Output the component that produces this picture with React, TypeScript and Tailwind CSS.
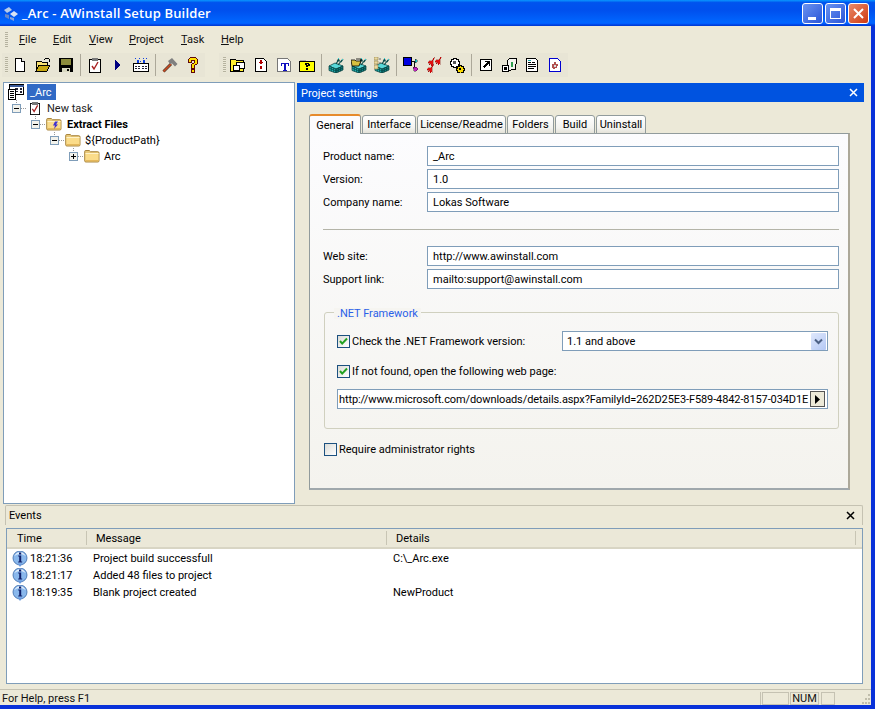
import React from 'react';

const font = { fontFamily: 'Roboto, sans-serif' };

// --- small drawn icons, all on a 16x16 grid ---
const Svg = ({ children, className = 'w-4 h-4' }: { children: React.ReactNode; className?: string }) => (
  <svg viewBox="0 0 16 16" className={className} shapeRendering="crispEdges">
    {children}
  </svg>
);

const NewIcon = () => (
  <Svg>
    <path d="M3.5 1.5h6l3 3v10h-9z" fill="#fff" stroke="#000" />
    <path d="M9.5 1.5v3h3" fill="#ddd" stroke="#000" />
  </Svg>
);
const OpenIcon = () => (
  <Svg>
    <path d="M1 4h5l1 1h5v3H4L1 14z" fill="#f8e070" stroke="#000" strokeWidth="1" />
    <path d="M1 14l3-6h11l-3 6z" fill="#c8a810" stroke="#000" strokeWidth="1" />
    <path d="M9 3l2-2 3 1v3" fill="none" stroke="#000" />
  </Svg>
);
const SaveIcon = () => (
  <Svg>
    <path d="M1 1h14v14H1z" fill="#000" />
    <path d="M3 2h10v6H3z" fill="#8b8b3c" />
    <path d="M4 11h8v4H4z" fill="#d8d8c0" />
    <path d="M9 12h2v2H9z" fill="#000" />
  </Svg>
);
const TaskIcon = ({ className }: { className?: string }) => (
  <Svg className={className}>
    <path d="M2.5 2.5h11v13h-11z" fill="#fff" stroke="#000" />
    <path d="M5 1h6v3H5z" fill="#777" />
    <path d="M5 9l2 3 4-7" fill="none" stroke="#a82020" strokeWidth="1.4" shapeRendering="auto" />
  </Svg>
);
const PlayIcon = () => (
  <Svg>
    <path d="M5 3l6 5-6 5z" fill="#000080" />
  </Svg>
);
const RunIcon = () => (
  <Svg>
    <path d="M.5 6.5h15v8H.5z" fill="#fff" stroke="#000" />
    <path d="M2 9h2v1H2zM5 9h2v1H5zM9 9h2v1H9zM12 9h2v1h-2zM2 11h2v1H2zM5 11h2v1H5zM9 11h2v1H9zM12 11h2v1h-2z" fill="#223" />
    <path d="M2 1h1v1H2zM6 1h1v1H6zM10 1h1v1h-1zM13 1h1v1h-1zM4 3h2v3H4zM10 3h2v3h-2zM7 4h1v1H7z" fill="#1040e0" />
  </Svg>
);
const HammerIcon = () => (
  <svg viewBox="0 0 16 16" className="w-4 h-4">
    <path d="M1.5 14.5L9 7" stroke="#5a4030" strokeWidth="3" />
    <path d="M1.5 14.5L9 7" stroke="#d04a20" strokeWidth="1.5" />
    <path d="M6 4l4-3 5.5 6-2.5 2.5-3-3-2 .5z" fill="#808080" />
  </svg>
);
const HelpIcon = () => (
  <Svg>
    <path d="M3.5 5.5v-3l2-2h5l2 2v4l-3 2v3h-3v-4l3-2v-2h-3v2z" fill="#ffe000" stroke="#600808" />
    <path d="M6.5 12.5h3v3h-3z" fill="#ffe000" stroke="#600808" />
  </Svg>
);
const FolderStackIcon = () => (
  <Svg>
    <path d="M.5 2.5h5l1 1h7v11H.5z" fill="#ffef30" stroke="#000" />
    <path d="M6.5 5.5h8v6h-8z" fill="#fff" stroke="#000" />
    <path d="M3.5 8.5h6v5h-6z" fill="#fff" stroke="#000" />
  </Svg>
);
const PageDiamondIcon = () => (
  <Svg>
    <path d="M2.5 1.5h8l3 3v10h-11z" fill="#fff" stroke="#000" />
    <path d="M7 3h2v4H7zM6 5h4v1H6zM7 9h2v3H7z" fill="#b00000" />
  </Svg>
);
const PageTIcon = () => (
  <Svg>
    <path d="M1.5 1.5h10l3 3v10h-13z" fill="#fff" stroke="#777" />
    <path d="M5 6h8v3h-1V7h-2v6h1v1H7v-1h1V7H6v2H5z" fill="#1010c0" />
  </Svg>
);
const FolderHelpIcon = () => (
  <Svg>
    <path d="M1 3.5h5l1 1h8" fill="#f0d860" stroke="#aaa" />
    <path d="M.5 4.5h15v10H.5z" fill="#ffff00" stroke="#000" />
    <path d="M6 6h4v1h1v2H9v1H7V8h2V7H8v1H6zM7 11h2v2H7z" fill="#000" />
  </Svg>
);
// teal isometric grid box with little sprouts on top
const GridCube = () => (
  <>
    <path d="M1 9l6-3 8 3-7 3z" fill="#58d8d8" stroke="#003838" strokeWidth=".7" />
    <path d="M1 9l7 3v4l-7-2.5z" fill="#20b0b0" stroke="#003838" strokeWidth=".7" />
    <path d="M8 12l7-3v4l-7 3z" fill="#108080" stroke="#003838" strokeWidth=".7" />
    <path d="M3.3 10v4.3M5.6 11v4.3M10.3 11v4.3M12.6 10v4.3M1 11l7 3M8 14l7-3" stroke="#003838" strokeWidth=".6" fill="none" />
    <path d="M8 7l3-5M10 8l4-5M12 4l-3-1M13 5l2-3" stroke="#064a4a" strokeWidth="1.2" fill="none" />
    <path d="M10 2l1-1M14 3l1-1" stroke="#30d0d0" fill="none" />
  </>
);
const CubeIcon = () => (
  <svg viewBox="0 0 16 16" className="w-4 h-4"><GridCube /></svg>
);
const CubeFolderIcon = () => (
  <svg viewBox="0 0 16 16" className="w-4 h-4">
    <GridCube />
    <path d="M0 3h4l1 1h5l-2 5H1z" fill="#d8c040" stroke="#000" strokeWidth=".8" />
    <path d="M5 2h5v2" fill="none" stroke="#000" strokeWidth=".8" />
  </svg>
);
const CubeDocsIcon = () => (
  <svg viewBox="0 0 16 16" className="w-4 h-4">
    <GridCube />
    <path d="M0 0h4v3H0zM0 4h4v3H0zM0 8h4v4H0z" fill="#e8d8a0" stroke="#908048" strokeWidth=".6" />
    <path d="M5 2h2M5 6h2" stroke="#666" fill="none" />
  </svg>
);
const TreeIcon = () => (
  <Svg>
    <path d="M.5 .5h8v8h-8z" fill="#0000e0" stroke="#000" />
    <path d="M9 4h3M11 4v8" stroke="#111" fill="none" />
    <path d="M12 2l3 2-3 2z" fill="#18c8c8" stroke="#111" strokeWidth=".4" />
    <path d="M10 10h3l2 2-2 2h-2z" fill="#c020c0" stroke="#111" strokeWidth=".4" />
  </Svg>
);
const Rocket = ({ x, y }: { x: number; y: number }) => (
  <path transform={`translate(${x} ${y})`} d="M6.5 0L4 3.5 1 4 0 6 2 6 1 8 3 7 3.5 9 5 7.5 5 5z" fill="#e01010" stroke="#700" strokeWidth=".3" />
);
const RocketsIcon = () => (
  <Svg>
    <Rocket x={2} y={0} />
    <Rocket x={9} y={-1} />
    <Rocket x={1} y={7} />
  </Svg>
);
const GearsIcon = () => (
  <Svg>
    <path d="M2 2h2V1h3v1h2v2h1v3H9v2H7v1H4V9H2V7H1V4h1z" fill="#fff" stroke="#000" />
    <path d="M4 4h3v3H4z" fill="#555" />
    <path d="M8 9h2V8h2v1h2v2h1v2h-1v2h-2v1h-2v-1H8v-2H7v-2h1z" fill="#f8d800" stroke="#000" />
    <path d="M10 11h2v2h-2z" fill="#000" />
  </Svg>
);
const ShortcutIcon = () => (
  <Svg>
    <path d="M2.5 2.5h11v11h-11z" fill="#fff" stroke="#000" />
    <path d="M7 4h5v5h-1V6.5L6 11 5 10l4.5-5H7z" fill="#000" />
  </Svg>
);
const BoxShortcutIcon = () => (
  <Svg>
    <path d="M6.5 3.5l3-2.5h5l1 1-1 10-8 2z" fill="#f4f4f0" stroke="#000" />
    <path d="M1.5 8.5h6v6h-6z" fill="#fff" stroke="#000" />
    <path d="M3 10h3v3H3z" fill="#000" />
    <path d="M10 5h2v5h-2z" fill="#30a050" />
  </Svg>
);
const DocIcon = () => (
  <Svg>
    <path d="M2.5 1.5h9l2 2v11h-11z" fill="#fff" stroke="#000" />
    <path d="M4 5h3v1H4zM8 5h3v1H8zM4 7h8v1H4zM4 9h8v1H4zM4 11h6v1H4z" fill="#000" />
    <path d="M4 3h3v1H4z" fill="#18a8a8" />
  </Svg>
);
const DocGearIcon = () => (
  <Svg>
    <path d="M2.5 1.5h8l3 3v10h-11z" fill="#fff" stroke="#0000d0" />
    <path d="M5 7h2V5h2v2h2v2h-1v2H8v1H6v-1H5V9z" fill="#b05050" />
    <path d="M7 8h2v2H7z" fill="#ddd" />
  </Svg>
);
const ProjectIcon = () => (
  <Svg>
    <path d="M1.5 .5h14v10h-14z" fill="#fff" stroke="#000" />
    <path d="M1.5 .5h14v2h-14z" fill="#3a5a9a" />
    <path d="M7 4h3v2H7zM12 4h2v2h-2zM12 7h2v2h-2zM7 7h3v1H7z" fill="#223" />
    <path d="M.5 5.5h7v10h-7z" fill="#fff" stroke="#000" />
    <path d="M2 7h4v1H2zM2 9h4v1H2zM2 11h4v1H2zM2 13h4v1H2z" fill="#000" />
  </Svg>
);
const FolderIcon = ({ bolt = false }: { bolt?: boolean }) => (
  <svg viewBox="0 0 16 16" className="w-4 h-4 shrink-0">
    <path d="M.7 3.5Q.7 2.5 1.7 2.5h3.6l1.2 1.2h7.3q1.2 0 1.2 1.2v8q0 1.1-1.2 1.1H1.9q-1.2 0-1.2-1.1z" fill="#e8c878" stroke="#a07a30" strokeWidth=".9" />
    <path d="M1.5 5.2h13v8h-13z" fill="#fbdc8a" />
    <path d="M1.5 5h13v1h-13z" fill="#fff2c8" />
    <path d="M1.5 12.2h13v1h-13z" fill="#e0b050" />
    {bolt && <path d="M9 5.5h3l-2 3h2l-4 4.5 1-3.4H7z" fill="#4030d0" />}
  </svg>
);
const InfoIcon = () => (
  <svg viewBox="0 0 16 16" className="w-4 h-4 shrink-0">
    <circle cx="8" cy="7" r="7" fill="#8ab8ec" stroke="#3a6aa8" strokeWidth=".8" />
    <path d="M5.5 12.5l5 0-2.5 3.5z" fill="#6a9adc" />
    <path d="M2.4 5a6 6 0 0 1 11.2 0 9 9 0 0 0-11.2 0z" fill="#e4effb" />
    <rect x="7" y="1.5" width="2.2" height="2" fill="#10206a" />
    <path d="M6.2 4.6h3v5.8h1v1H6.2v-1h1V5.6h-1z" fill="#10206a" />
  </svg>
);

const Gripper = ({ h = 'h-[16px]' }: { h?: string }) => (
  <div className={`w-[3px] ${h} bg-[repeating-linear-gradient(180deg,#b5b29f_0,#b5b29f_1px,#ece9d8_1px,#ece9d8_2px)]`} />
);
const ToolSep = () => (
  <div className="w-[6px] h-[22px] flex justify-center">
    <div className="w-px h-full bg-[#aca899]" />
  </div>
);
const Tool = ({ icon }: { icon: React.ReactNode }) => (
  <div className="w-[23px] h-[22px] flex items-center justify-center">{icon}</div>
);

// first letter gets the access key underline
const MenuItem = ({ label, width }: { label: string; width: string }) => (
  <span className={width}>
    <span className="underline">{label[0]}</span>
    {label.slice(1)}
  </span>
);

// expander with its dotted lines
const Expander = ({ plus = false }: { plus?: boolean }) => (
  <svg viewBox="0 0 15 16" className="w-[15px] h-4 shrink-0" shapeRendering="crispEdges">
    <path d="M4.5 0v4" stroke="#999" strokeDasharray="1 1" />
    <path d="M9 8.5h6" stroke="#999" strokeDasharray="1 1" />
    <rect x="0.5" y="4.5" width="8" height="8" fill="#f2f2ec" stroke="#7f9db9" />
    <path d="M2 8.5h5" stroke="#000" />
    {plus && <path d="M4.5 6v5" stroke="#000" />}
  </svg>
);

const TreeRow = ({ pad, icon, children, plus }: { pad: string; icon: React.ReactNode; children: React.ReactNode; plus?: boolean }) => (
  <div className={`flex items-center h-4 ${pad}`}>
    <Expander plus={plus} />
    {icon}
    {children}
  </div>
);

const Field = ({ label, value }: { label: string; value: string }) => (
  <div className="flex items-center h-5">
    <div className="w-[104px]">{label}</div>
    <div className="flex-1 h-5 bg-white border border-[#7f9db9] flex items-center pl-[5px]">{value}</div>
  </div>
);

const Check = ({ on = true }: { on?: boolean }) => (
  <div className="w-[13px] h-[13px] border border-[#1c5180] bg-[linear-gradient(135deg,#dcdcd7,#ffffff)] shrink-0">
    {on && (
      <svg viewBox="0 0 11 11" className="w-[11px] h-[11px]">
        <path d="M2 5l2.2 2.6L9 2.5" fill="none" stroke="#21a121" strokeWidth="2" />
      </svg>
    )}
  </div>
);

const tabs = ['Interface', 'License/Readme', 'Folders', 'Build', 'Uninstall'];
const tabWidths = ['w-[54px]', 'w-[89px]', 'w-[47px]', 'w-[40px]', 'w-[50px]'];

const events = [
  { time: '18:21:36', msg: 'Project build successfull', details: 'C:\\_Arc.exe' },
  { time: '18:21:17', msg: 'Added 48 files to project', details: '' },
  { time: '18:19:35', msg: 'Blank project created', details: 'NewProduct' },
];

const CloseX = () => (
  <svg viewBox="0 0 9 9" className="w-[9px] h-[9px]">
    <path d="M1 1l7 7M8 1L1 8" stroke="currentColor" strokeWidth="1.5" />
  </svg>
);

const WinButton = ({ className, children }: { className: string; children: React.ReactNode }) => (
  <div className={`w-[21px] h-[21px] rounded-[3px] border border-white flex items-center justify-center ${className}`}>
    {children}
  </div>
);

export default function App() {
  return (
    <div className="w-[875px] h-[709px] flex flex-col bg-[#ece9d8] text-[11px] leading-none text-black overflow-hidden" style={font}>
      {/* title bar */}
      <div className="h-[26px] shrink-0 flex items-center pl-[3px] pr-[6px] text-white bg-[linear-gradient(180deg,#0997ff_0%,#0053ee_10%,#0050ee_40%,#0066ff_86%,#005bff_92%,#003dd7_96%,#003dd7_100%)]">
        <svg viewBox="0 0 16 16" className="w-4 h-4 mr-[3px]">
          <path d="M1 5l5-3 3 3-5 3z" fill="#b8cce8" />
          <path d="M7 9l4-3 4 3-4 3z" fill="#d8e4f4" />
          <path d="M2 9l4 1v4l-4-2z" fill="#6888c8" />
          <path d="M7 12l4 1v3l-4-2z" fill="#8aa4d8" />
        </svg>
        <span className="text-[13px] font-semibold tracking-[0.15px]" style={{ fontFamily: '"Open Sans", sans-serif' }}>_Arc - AWinstall Setup Builder</span>
        <div className="ml-auto flex gap-[2px]">
          <WinButton className="bg-[linear-gradient(135deg,#6a93f0,#2a55d8)]">
            <div className="w-2 h-[3px] bg-white mt-[10px] -ml-[2px]" />
          </WinButton>
          <WinButton className="bg-[linear-gradient(135deg,#6a93f0,#2a55d8)]">
            <div className="w-[11px] h-[11px] border border-white border-t-[3px]" />
          </WinButton>
          <WinButton className="bg-[linear-gradient(135deg,#e88a6a,#d03a10)] text-white">
            <svg viewBox="0 0 11 11" className="w-[11px] h-[11px]">
              <path d="M1 1l9 9M10 1L1 10" stroke="currentColor" strokeWidth="2" />
            </svg>
          </WinButton>
        </div>
      </div>

      <div className="flex-1 min-h-0 flex flex-col border-r-4 border-b-4 border-[#0831d9]">
        {/* menu */}
        <div className="h-[27px] shrink-0 flex items-center pl-[5px]">
          <Gripper />
          <div className="flex ml-[11px] text-[#111]">
            <MenuItem label="File" width="w-[34px]" />
            <MenuItem label="Edit" width="w-[36px]" />
            <MenuItem label="View" width="w-[40px]" />
            <MenuItem label="Project" width="w-[52px]" />
            <MenuItem label="Task" width="w-[40px]" />
            <MenuItem label="Help" width="w-[30px]" />
          </div>
        </div>

        {/* toolbars */}
        <div className="h-[24px] shrink-0 flex items-center pl-[2px]">
          <div className="w-[203px] h-[24px] flex items-center pl-[3px] bg-[#e8e5d5]">
            <Gripper />
            <Tool icon={<NewIcon />} />
            <Tool icon={<OpenIcon />} />
            <Tool icon={<SaveIcon />} />
            <ToolSep />
            <Tool icon={<TaskIcon />} />
            <Tool icon={<PlayIcon />} />
            <Tool icon={<RunIcon />} />
            <ToolSep />
            <Tool icon={<HammerIcon />} />
            <Tool icon={<HelpIcon />} />
          </div>
          <div className="w-[349px] ml-[14px] h-[24px] flex items-center pl-[4px] bg-[#e8e5d5]">
            <Gripper />
            <Tool icon={<FolderStackIcon />} />
            <Tool icon={<PageDiamondIcon />} />
            <Tool icon={<PageTIcon />} />
            <Tool icon={<FolderHelpIcon />} />
            <ToolSep />
            <Tool icon={<CubeIcon />} />
            <Tool icon={<CubeFolderIcon />} />
            <Tool icon={<CubeDocsIcon />} />
            <ToolSep />
            <Tool icon={<TreeIcon />} />
            <Tool icon={<RocketsIcon />} />
            <Tool icon={<GearsIcon />} />
            <ToolSep />
            <Tool icon={<ShortcutIcon />} />
            <Tool icon={<BoxShortcutIcon />} />
            <Tool icon={<DocIcon />} />
            <Tool icon={<DocGearIcon />} />
          </div>
        </div>

        {/* tree + settings */}
        <div className="h-[422px] mt-[5px] shrink-0 flex pl-[3px] pr-[7px]">
          <div className="w-[292px] shrink-0 bg-white border border-[#7f9db9]">
            <div className="flex items-center h-4 pl-1 mt-px">
              <ProjectIcon />
              <span className="ml-[3px] h-4 w-[29px] pl-[3px] flex items-center bg-[#316ac5] text-white">_Arc</span>
            </div>
            <TreeRow pad="pl-2" icon={<TaskIcon className="w-[14px] h-4 shrink-0 ml-px" />}>
              <span className="ml-[5px] text-[#222]">New task</span>
            </TreeRow>
            <TreeRow pad="pl-[27px]" icon={<FolderIcon bolt />}>
              <span className="ml-[5px] font-bold">Extract Files</span>
            </TreeRow>
            <TreeRow pad="pl-[46px]" icon={<FolderIcon />}>
              <span className="ml-[4px]">{'${ProductPath}'}</span>
            </TreeRow>
            <TreeRow pad="pl-[65px]" icon={<FolderIcon />} plus>
              <span className="ml-[4px]">Arc</span>
            </TreeRow>
          </div>

          <div className="flex-1 min-w-0 ml-[2px] pt-px flex flex-col">
            <div className="h-[19px] shrink-0 bg-[#0053e0] text-white flex items-center justify-between pl-1 pr-[6px]">
              <span className="pt-px">Project settings</span>
              <CloseX />
            </div>

            <div className="pl-3 pr-[14px] pt-[12px]">
              <div className="flex items-end h-[20px] -mb-px relative gap-[1px]">
                <div className="w-[52px] h-[20px] bg-[#fcfcfe] border border-b-0 border-[#919b9c] border-t-2 border-t-[#e68b2c] rounded-t-[3px] flex items-center justify-center relative z-10">
                  General
                </div>
                {tabs.map((t, i) => (
                  <div key={t} className={`${tabWidths[i]} h-[19px] bg-[linear-gradient(180deg,#ffffff,#f3f3ef_70%,#e4e2d8)] border border-[#919b9c] rounded-t-[3px] flex items-center justify-center`}>
                    {t}
                  </div>
                ))}
              </div>

              {/* tab page */}
              <div className="h-[357px] border border-[#919b9c] border-r-2 border-b-2 border-r-[#aca899] border-b-[#a0a8ac] bg-[linear-gradient(180deg,#fcfcfe,#f4f3ee)] pt-3 pl-[13px] pr-[9px]">
                <div className="flex flex-col gap-[3px]">
                  <Field label="Product name:" value="_Arc" />
                  <Field label="Version:" value="1.0" />
                  <Field label="Company name:" value="Lokas Software" />
                </div>
                <div className="h-px bg-[#b4b4a8] mt-[17px] mb-[16px]" />
                <div className="flex flex-col gap-[3px]">
                  <Field label="Web site:" value="http://www.awinstall.com" />
                  <Field label="Support link:" value="mailto:support@awinstall.com" />
                </div>

                {/* .NET group */}
                <div className="relative h-[117px] mt-[23px] ml-px border border-[#d0d0bf] rounded-[3px] pt-[18px] pl-[12px] pr-[10px]">
                  <span className="absolute -top-[5px] left-[9px] px-[3px] bg-[#f6f5f1] text-[#2a5fe8]">.NET Framework</span>
                  <div className="flex items-center h-5">
                    <Check />
                    <span className="ml-[2px]">Check the .NET Framework version:</span>
                    <div className="ml-auto w-[266px] h-5 bg-white border border-[#7f9db9] flex items-center pl-1 pr-px">
                      <span>1.1 and above</span>
                      <div className="ml-auto w-[15px] h-[17px] bg-[linear-gradient(135deg,#dfe8fc,#b4c8f4)] rounded-[1px] flex items-center justify-center">
                        <svg viewBox="0 0 9 7" className="w-[9px] h-[7px]">
                          <path d="M1 1.5l3.5 3.5L8 1.5" fill="none" stroke="#4d6185" strokeWidth="2" />
                        </svg>
                      </div>
                    </div>
                  </div>
                  <div className="flex items-center h-[13px] mt-[14px]">
                    <Check />
                    <span className="ml-[2px]">If not found, open the following web page:</span>
                  </div>
                  <div className="h-5 mt-[11px] bg-white border border-[#7f9db9] flex items-center pl-px pr-[2px]">
                    <span className="whitespace-nowrap tracking-[-0.1px]">http://www.microsoft.com/downloads/details.aspx?FamilyId=262D25E3-F589-4842-8157-034D1E</span>
                    <div className="ml-auto w-[15px] h-4 shrink-0 bg-[#ece9d8] border border-[#555] flex items-center justify-center">
                      <svg viewBox="0 0 5 9" className="w-[5px] h-[9px]">
                        <path d="M0 0l5 4.5L0 9z" fill="#000" />
                      </svg>
                    </div>
                  </div>
                </div>

                <div className="flex items-center mt-[14px] ml-px">
                  <Check on={false} />
                  <span className="ml-[2px]">Require administrator rights</span>
                </div>
              </div>
            </div>
          </div>
        </div>

        {/* events panel */}
        <div className="h-[20px] mt-px ml-[5px] mr-[8px] shrink-0 border border-b-0 border-[#c5c2b2] rounded-t-[2px] flex items-center justify-between pl-[3px] pr-[7px]">
          <span>Events</span>
          <CloseX />
        </div>
        <div className="h-[156px] mt-[3px] ml-[6px] mr-[8px] shrink-0 bg-white border border-[#7f9db9]">
          <div className="h-[20px] bg-[#ebe8d8] border-b-2 border-[#d8d5c4] flex items-center">
            <div className="w-[80px] pl-[10px] h-[14px] flex items-center border-r border-[#c8c5b4]">Time</div>
            <div className="w-[300px] pl-[9px] h-[14px] flex items-center border-r border-[#c8c5b4]">Message</div>
            <div className="flex-1 pl-[9px] h-[14px] flex items-center border-r border-[#c8c5b4] mr-[6px]">Details</div>
          </div>
          <div className="pt-px">
            {events.map(ev => (
              <div key={ev.time} className="flex items-center h-[17px] pl-[5px]">
                <InfoIcon />
                <span className="ml-[2px] w-[63px]">{ev.time}</span>
                <span className="w-[300px]">{ev.msg}</span>
                <span>{ev.details}</span>
              </div>
            ))}
          </div>
        </div>

        {/* status bar */}
        <div className="flex-1 mt-[5px] border-t border-[#c5c2b2] flex items-stretch pt-[2px] text-[#111]">
          <div className="w-[761px] pl-[2px] flex items-center border-r border-[#c5c2b2]">For Help, press F1</div>
          <div className="w-[27px] ml-[1px] border border-[#c5c2b2]" />
          <div className="w-[29px] ml-[1px] border border-[#c5c2b2] flex items-center justify-center">NUM</div>
          <div className="w-[14px] ml-[2px] border border-[#c5c2b2]" />
          <div className="flex-1 flex items-end justify-end">
            <svg viewBox="0 0 12 12" className="w-3 h-3" shapeRendering="crispEdges">
              <path d="M9 1h2v2H9zM6 5h2v2H6zM9 5h2v2H9zM3 9h2v2H3zM6 9h2v2H6zM9 9h2v2H9z" fill="#c0bdab" />
            </svg>
          </div>
        </div>
      </div>
    </div>
  );
}
